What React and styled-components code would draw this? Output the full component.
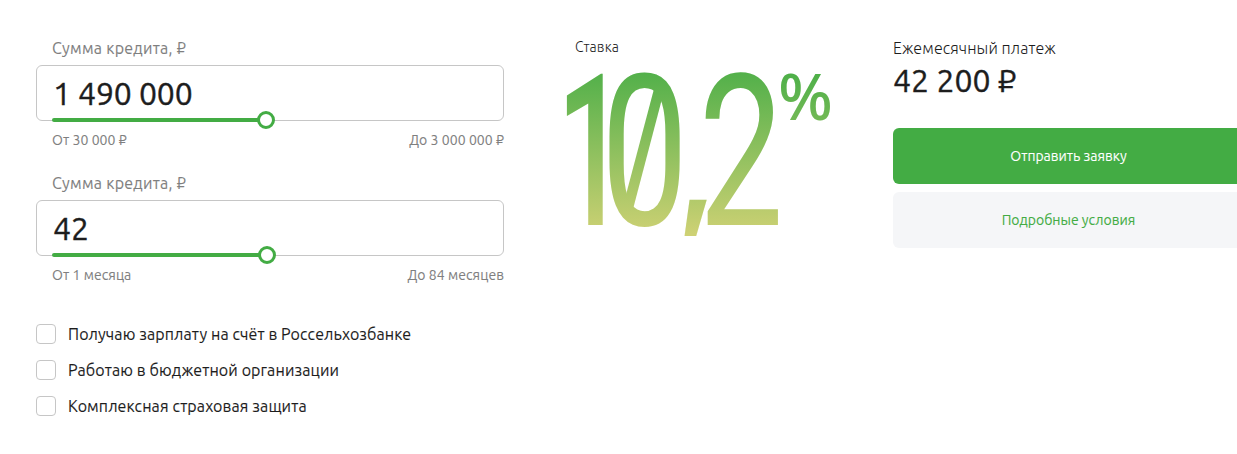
import React from "react";
import styled, { createGlobalStyle } from "styled-components";

const GlobalStyle = createGlobalStyle`
  *, *::before, *::after { box-sizing: border-box; }
  body {
    margin: 0;
    background: #fff;
    color: #1d1d1d;
    font-family: Ubuntu, "Noto Sans", "Open Sans", sans-serif;
    font-weight: 400;
    overflow: hidden;
  }
`;

const Calculator = styled.main`
  display: flex;
  align-items: flex-start;
  height: 454px;
  padding: 36px 0 0 36px;
  overflow: hidden;
`;

const Form = styled.form`
  flex: none;
  width: 468px;
`;

const Field = styled.div`
  height: 135px;
`;

const FieldLabel = styled.div`
  height: 29px;
  padding-left: 16px;
  font-size: 16px;
  line-height: 24px;
  letter-spacing: 0.25px;
  -webkit-text-stroke: 0.1px;
  color: #7f7f7f;
`;

const FieldBox = styled.div`
  position: relative;
  height: 56px;
  padding-left: 16px;
  border: 1px solid #c6c6c6;
  border-radius: 6px;
  font-size: 32px;
  line-height: 55px;
  letter-spacing: -0.15px;
  -webkit-text-stroke: 0.4px;
`;

const Track = styled.div`
  position: absolute;
  left: 15px;
  bottom: -2px;
  width: ${(p) => p.$length}px;
  height: 4px;
  border-radius: 2px;
  background: #43ac44;
`;

const Thumb = styled.span`
  position: absolute;
  right: -9px;
  top: -7px;
  width: 18px;
  height: 18px;
  border: 3px solid #43ac44;
  border-radius: 50%;
  background: #fff;
`;

const Limits = styled.div`
  display: flex;
  justify-content: space-between;
  padding: 9px 0 0 16px;
  font-size: 14px;
  line-height: 20px;
  letter-spacing: 0.06px;
  -webkit-text-stroke: 0.1px;
  color: #7f7f7f;
`;

const Options = styled.div`
  display: flex;
  flex-direction: column;
  gap: 12px;
  padding-top: 16px;
`;

const Option = styled.label`
  display: flex;
  align-items: center;
  gap: 12px;
  height: 24px;
  font-size: 16px;
  line-height: 24px;
  letter-spacing: 0.1px;
  -webkit-text-stroke: 0.1px;
  white-space: nowrap;
`;

const Checkbox = styled.span`
  width: 20px;
  height: 20px;
  border: 1px solid #c6c6c6;
  border-radius: 4px;
`;

const Rate = styled.section`
  flex: none;
  width: 270px;
  margin-left: 63px;
`;

const RateLabel = styled.div`
  padding-left: 8px;
  font-size: 14px;
  font-weight: 300;
  line-height: 22px;
  letter-spacing: 0.15px;
`;

const RateFigure = styled.svg`
  display: block;
  margin-top: 6px;
  overflow: visible;
`;

const Payment = styled.section`
  flex: none;
  display: flex;
  flex-direction: column;
  width: 351px;
  margin-left: 56px;
`;

const PaymentLabel = styled.div`
  font-size: 16px;
  font-weight: 300;
  line-height: 24px;
  letter-spacing: 0.1px;
`;

const PaymentSum = styled.div`
  margin-bottom: 28px;
  font-size: 32px;
  line-height: 40px;
  -webkit-text-stroke: 0.4px;
`;

const Button = styled.button`
  height: 56px;
  margin-bottom: 8px;
  border: 0;
  border-radius: 6px;
  font-family: inherit;
  font-size: 14px;
  -webkit-text-stroke: 0.1px;
  color: ${(p) => (p.$primary ? "#fff" : "#43ac44")};
  background: ${(p) => (p.$primary ? "#43ac44" : "#f5f6f8")};
`;

const fields = [
  { label: "Сумма кредита, ₽", value: "1 490 000", length: 214, min: "От 30 000 ₽", max: "До 3 000 000 ₽" },
  { label: "Сумма кредита, ₽", value: "42", length: 215, min: "От 1 месяца", max: "До 84 месяцев" },
];

const options = [
  "Получаю зарплату на счёт в Россельхозбанке",
  "Работаю в бюджетной организации",
  "Комплексная страховая защита",
];

// Each digit is condensed separately, so every glyph has its own scale.
// The digits share one baseline at y = 161.
function RateValue() {
  return (
    <RateFigure width="270" height="174" viewBox="0 0 270 174" fill="url(#rate)" fontFamily="Roboto, sans-serif" fontSize="211">
      <defs>
        <linearGradient id="rate" gradientUnits="userSpaceOnUse" x1="0" y1="-153" x2="0" y2="11">
          <stop offset="0" stopColor="#52b04a" />
          <stop offset="1" stopColor="#ced174" />
        </linearGradient>
        <linearGradient id="percent" gradientUnits="userSpaceOnUse" x1="0" y1="-48" x2="0" y2="116">
          <stop offset="0" stopColor="#4caf48" />
          <stop offset="1" stopColor="#ced174" />
        </linearGradient>
        <linearGradient id="comma" gradientUnits="userSpaceOnUse" x1="0" y1="-173" x2="0" y2="27">
          <stop offset="0" stopColor="#4caf48" />
          <stop offset="1" stopColor="#ced174" />
        </linearGradient>
      </defs>
      <text transform="translate(-10.3 161) scale(.58 1)" fontWeight="500">1</text>
      <text transform="translate(33.7 161) scale(.74 1)" fontWeight="400">0</text>
      <g transform="translate(-2 161)">
        <path d="M89.5-138 58-19 67-12 98-130Z" />
      </g>
      <text transform="translate(110.8 149) scale(.78 .8)" fill="url(#comma)" fontFamily="Inter, sans-serif" fontSize="150" fontWeight="700">,</text>
      <text transform="translate(131.7 161) scale(.715 1)" fontWeight="400">2</text>
      <text transform="translate(211.3 56)" fill="url(#percent)" fontFamily="Noto Sans, sans-serif" fontSize="64" fontWeight="500">%</text>
    </RateFigure>
  );
}

export default function App() {
  return (
    <>
      <GlobalStyle />
      <Calculator>
        <Form>
          {fields.map((f) => (
            <Field key={f.value}>
              <FieldLabel>{f.label}</FieldLabel>
              <FieldBox>
                {f.value}
                <Track $length={f.length}>
                  <Thumb />
                </Track>
              </FieldBox>
              <Limits>
                <span>{f.min}</span>
                <span>{f.max}</span>
              </Limits>
            </Field>
          ))}
          <Options>
            {options.map((text) => (
              <Option key={text}>
                <Checkbox />
                {text}
              </Option>
            ))}
          </Options>
        </Form>
        <Rate>
          <RateLabel>Ставка</RateLabel>
          <RateValue />
        </Rate>
        <Payment>
          <PaymentLabel>Ежемесячный платеж</PaymentLabel>
          <PaymentSum>42 200 ₽</PaymentSum>
          <Button type="button" $primary>Отправить заявку</Button>
          <Button type="button">Подробные условия</Button>
        </Payment>
      </Calculator>
    </>
  );
}
